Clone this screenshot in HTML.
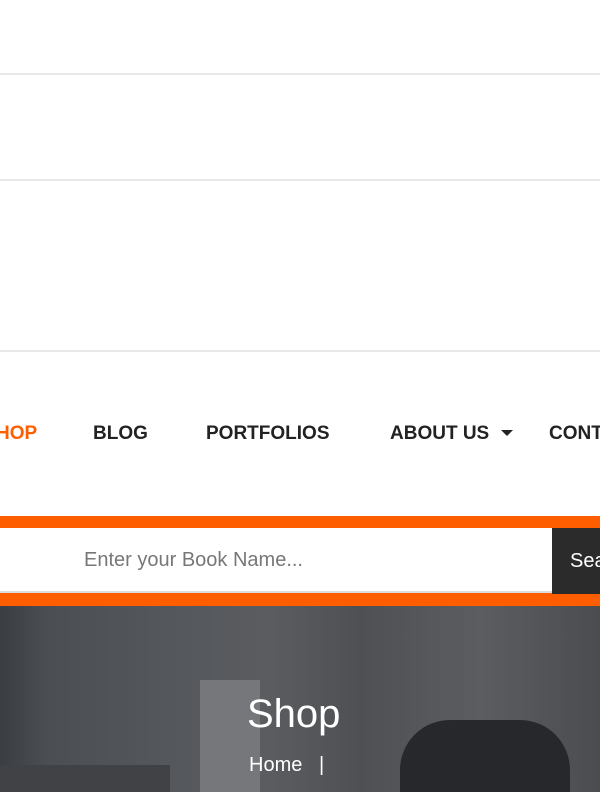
<!DOCTYPE html>
<html><head><style>
html,body{margin:0;width:600px;height:792px;overflow:hidden}
body{background:#fff;font-family:"Liberation Sans",sans-serif}
#w{position:relative;width:600px;height:792px;overflow:hidden}
.l{position:absolute;left:0;width:600px;height:2px;background:#e8e8e8}
.nav{position:absolute;top:423px;font-weight:bold;font-size:19px;color:#222;white-space:nowrap}
</style></head><body><div id="w">
<div class="l" style="top:73px"></div>
<div class="l" style="top:179px"></div>
<div class="l" style="top:350px"></div>
<div class="nav" style="left:-4px;color:#ff5e00">HOP</div>
<div class="nav" style="left:93px">BLOG</div>
<div class="nav" style="left:206px">PORTFOLIOS</div>
<div class="nav" style="left:390px">ABOUT US</div>
<div style="position:absolute;left:501px;top:430px;width:0;height:0;border-left:6px solid transparent;border-right:6px solid transparent;border-top:6px solid #222"></div>
<div style="position:absolute;top:423px;left:549px;width:51px;overflow:hidden;font-weight:bold;font-size:19px;color:#222;white-space:nowrap">CONTACT</div>
<div style="position:absolute;top:516px;left:0;width:600px;height:90px;background:#ff5e00"></div>
<div style="position:absolute;top:528px;left:0;width:552px;height:63px;background:#fff;border-bottom:2px solid #ddd"></div>
<div style="position:absolute;top:549px;left:84px;font-size:20px;color:#777">Enter your Book Name...</div>
<div style="position:absolute;top:528px;left:552px;width:48px;height:66px;background:#2b2b2b;color:#fff;font-size:20px;line-height:66px;padding-left:18px;box-sizing:border-box;overflow:hidden;white-space:nowrap">Search</div>
<div style="position:absolute;top:606px;left:0;width:600px;height:186px;background:linear-gradient(90deg,#3a3d42 0,#4b4e53 8%,#55585c 30%,#5a5c60 45%,#4e5054 60%,#5b5d60 80%,#4a4c50 100%)"></div>
<div style="position:absolute;top:765px;left:0;width:170px;height:27px;background:#404246"></div>
<div style="position:absolute;top:720px;left:400px;width:170px;height:72px;background:#26282c;border-radius:50px 50px 0 0"></div>
<div style="position:absolute;top:680px;left:200px;width:60px;height:112px;background:#75777a"></div>
<div style="position:absolute;top:692px;left:247px;font-size:40px;color:#fff">Shop</div>
<div style="position:absolute;top:754px;left:249px;font-size:20px;color:#fff">Home&nbsp;&nbsp;&nbsp;|</div>
</div></body></html>
